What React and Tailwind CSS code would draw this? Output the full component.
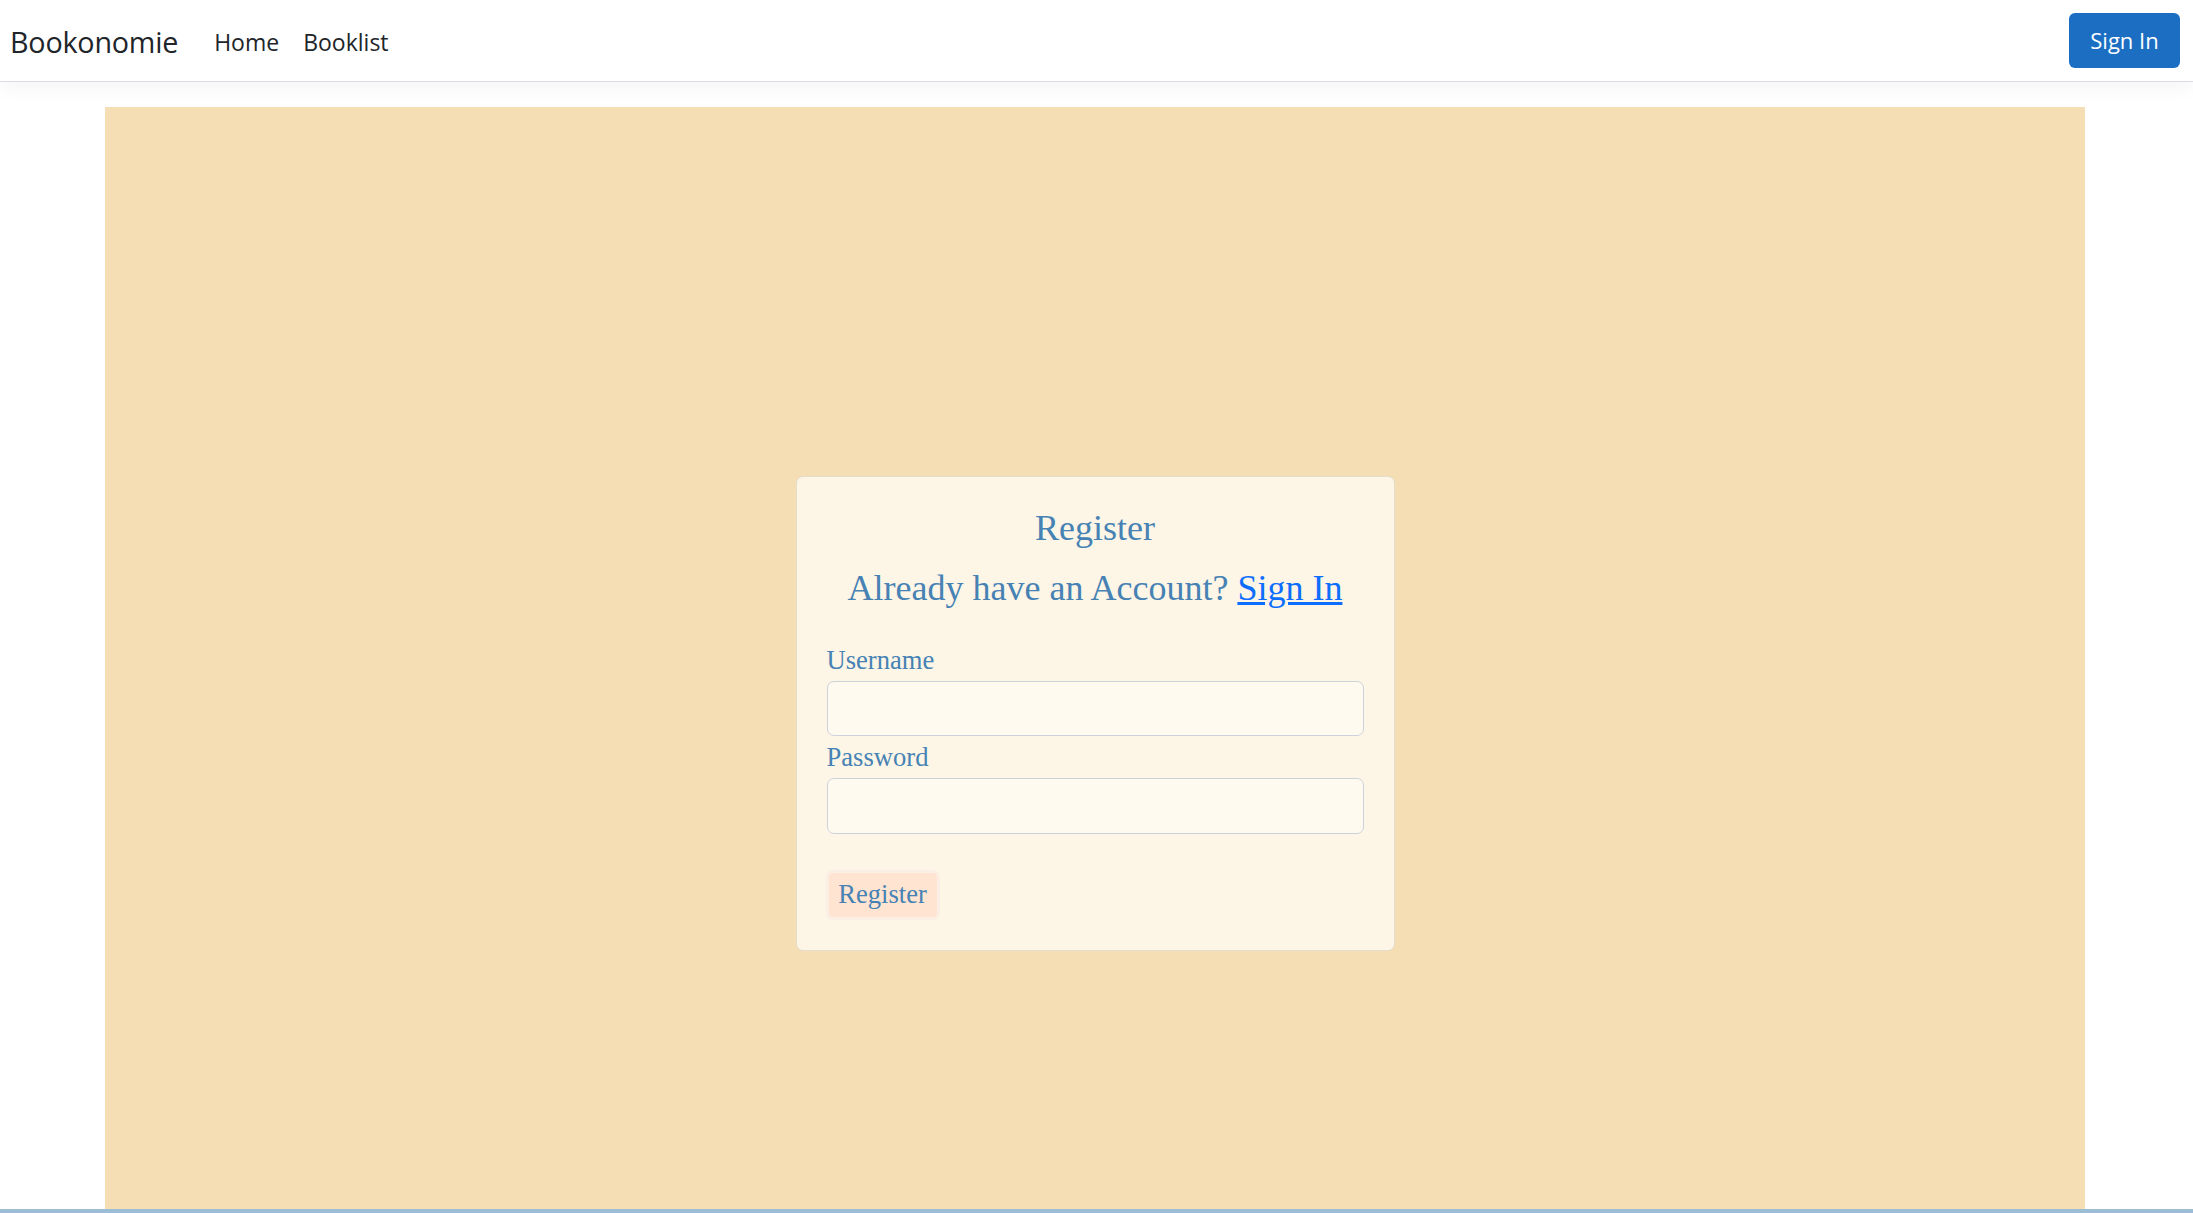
import React from "react";

const serif = "font-['Liberation_Serif','Times_New_Roman',serif]";

function NavBar() {
  return (
    <header className="relative z-10 h-[82px] w-full border-b border-[#dcdce3] bg-white shadow-[0_6px_18px_rgba(0,0,0,0.045)] font-['Segoe_UI','Open_Sans','Noto_Sans',sans-serif]">
      <div className="flex h-full items-center justify-between pl-[10px] pr-[13px]">
        <div className="mt-[3px] flex items-center">
          <a className="text-[28.7px] text-[#212529] tracking-[-0.2px]">Bookonomie</a>
          <nav className="ml-[36px] flex items-center gap-[24px] text-[23px] text-[#212529]">
            <a>Home</a>
            <a>Booklist</a>
          </nav>
        </div>
        <button className="h-[55px] w-[111px] rounded-[6px] bg-[#1b6ec2] text-[22px] text-white">
          Sign In
        </button>
      </div>
    </header>
  );
}

function RegisterCard() {
  return (
    <div className={`mx-auto w-[599px] rounded-[7px] border border-[#e4dccd] bg-[#fdf5e6] px-[30px] pt-[30px] pb-[33px] text-[#4682b4] ${serif}`}>
      <h3 className="text-center text-[36px] leading-[43px]">Register</h3>
      <p className="mt-[17px] text-center text-[36px] leading-[43px]">
        Already have an Account?{" "}
        <a className="text-[#0d6efd] underline">Sign In</a>
      </p>
      <form className="mt-[29px]">
        <label className="block text-[26.6px] leading-[42px]">Username</label>
        <input className="block h-[55px] w-full rounded-[7px] border border-[#ccd2db] bg-[#fffaf0] outline-none" />
        <label className="block text-[26.6px] leading-[42px]">Password</label>
        <input type="password" className="block h-[56px] w-full rounded-[7px] border border-[#ccd2db] bg-[#fffaf0] outline-none" />
        <button
          type="button"
          className="mt-[39px] ml-[2px] h-[44px] w-[108px] rounded-[4px] bg-[#fee4d1] text-[26.6px] text-[#4682b4] shadow-[0_0_0_3px_#fbeee4]"
        >
          Register
        </button>
      </form>
    </div>
  );
}

export default function App() {
  return (
    <div className="min-h-[1213px] w-full bg-white">
      <NavBar />
      <main className="ml-[105px] mt-[25px] h-[1102px] w-[1980px] bg-[#f5deb3] pt-[369px]">
        <RegisterCard />
      </main>
      <div className="h-[4px] w-full bg-[#9cbdd6]" />
    </div>
  );
}
